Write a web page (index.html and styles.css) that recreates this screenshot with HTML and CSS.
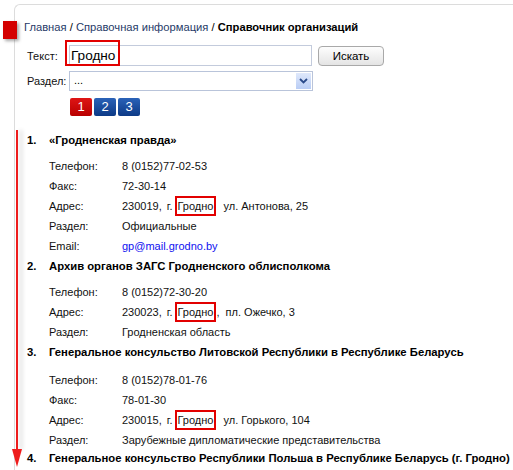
FILE: index.html
```html
<!DOCTYPE html>
<html lang="ru">
<head>
<meta charset="utf-8">
<title>Справочник организаций</title>
<link rel="stylesheet" href="styles.css">
</head>
<body>
<div class="page">
  <div class="mark-square"></div>
  <div class="mark-arrow"></div>
  <div class="panel">
    <div class="crumbs">
      <a href="#" class="crumb-link">Главная</a> / <a href="#" class="crumb-link">Справочная информация</a> / <b>Справочник организаций</b>
    </div>
    <div class="form">
      <div class="label">Текст:</div>
      <div class="field-row">
        <div class="input">
          <span class="input-text">Гродно</span>
          <span class="input-hl"></span>
        </div>
        <div class="btn">Искать</div>
      </div>
      <div class="label">Раздел:</div>
      <div class="select">
        <span class="select-text">...</span>
        <span class="select-btn">
          <svg width="9" height="6" viewBox="0 0 9 6"><path d="M1 1 L4.5 4.5 L8 1" fill="none" stroke="#2a4a8a" stroke-width="1.8"/></svg>
        </span>
      </div>
      <div></div>
      <div class="pager">
        <span class="pg pg-active">1</span>
        <span class="pg">2</span>
        <span class="pg">3</span>
      </div>
    </div>

    <div class="list">
      <div class="item">
        <div class="title"><span class="num">1.</span><span>«Гродненская правда»</span></div>
        <div class="rows">
          <div class="k">Телефон:</div><div class="v">8 (0152)77-02-53</div>
          <div class="k">Факс:</div><div class="v">72-30-14</div>
          <div class="k">Адрес:</div><div class="v">230019,<span class="sp"></span>г.<span class="hl">Гродно</span><span class="sp2"></span>ул. Антонова, 25</div>
          <div class="k">Раздел:</div><div class="v">Официальные</div>
          <div class="k">Email:</div><div class="v"><a href="#" class="mail">gp@mail.grodno.by</a></div>
        </div>
      </div>
      <div class="item">
        <div class="title"><span class="num">2.</span><span>Архив органов ЗАГС Гродненского облисполкома</span></div>
        <div class="rows">
          <div class="k">Телефон:</div><div class="v">8 (0152)72-30-20</div>
          <div class="k">Адрес:</div><div class="v">230023,<span class="sp"></span>г.<span class="hl">Гродно</span>,&nbsp; пл. Ожечко, 3</div>
          <div class="k">Раздел:</div><div class="v">Гродненская область</div>
        </div>
      </div>
      <div class="item">
        <div class="title"><span class="num">3.</span><span>Генеральное консульство Литовской Республики в Республике Беларусь</span></div>
        <div class="rows rows-wide">
          <div class="k">Телефон:</div><div class="v">8 (0152)78-01-76</div>
          <div class="k">Факс:</div><div class="v">78-01-30</div>
          <div class="k">Адрес:</div><div class="v">230015,<span class="sp"></span>г.<span class="hl">Гродно</span><span class="sp2"></span>ул. Горького, 104</div>
          <div class="k">Раздел:</div><div class="v">Зарубежные дипломатические представительства</div>
        </div>
      </div>
      <div class="item">
        <div class="title"><span class="num">4.</span><span>Генеральное консульство Республики Польша в Республике Беларусь (г. Гродно)</span></div>
      </div>
    </div>
  </div>
</div>
</body>
</html>
```
FILE: styles.css
```css
html, body {
  margin: 0;
  padding: 0;
  background: #ffffff;
}
body {
  font-family: "Liberation Sans", Arial, sans-serif;
  font-size: 11px;
  color: #000;
  overflow: hidden;
}
.page {
  position: relative;
  padding-top: 4px;
  height: 466px;
}
.mark-square {
  position: absolute;
  left: 3px;
  top: 21px;
  width: 14px;
  height: 18px;
  background: #d40000;
  box-shadow: 2px 2px 3px rgba(0, 0, 0, 0.35);
  z-index: 2;
}
.mark-arrow {
  position: absolute;
  left: 16px;
  top: 130px;
  width: 2px;
  height: 320px;
  background: #ee1c1c;
  box-shadow: 4px 0 4px rgba(0, 0, 0, 0.18);
  z-index: 2;
}
.mark-arrow::after {
  content: "";
  position: absolute;
  left: -4px;
  bottom: -17px;
  border-left: 5px solid transparent;
  border-right: 5px solid transparent;
  border-top: 18px solid #ee1c1c;
}
.panel {
  margin-left: 14px;
  border-top: 1px solid #dcdcdc;
  border-left: 1px solid #dcdcdc;
  border-top-left-radius: 6px;
  padding: 14px 0 0 12px;
  height: 460px;
}
.crumbs {
  margin-left: -3px;
  line-height: 16px;
  height: 16px;
  white-space: nowrap;
  font-size: 11.2px;
}
.crumb-link {
  color: #1f3a68;
  text-decoration: none;
}
.form {
  margin-top: 10px;
  display: grid;
  grid-template-columns: 42px auto;
  row-gap: 5px;
  align-items: center;
}
.label {
  color: #111;
}
.field-row {
  display: flex;
  align-items: center;
}
.input {
  position: relative;
  width: 241px;
  height: 19px;
  border: 1px solid #c3cbdc;
  background: #fff;
}
.input-text {
  position: absolute;
  left: 1px;
  top: 1px;
  font-size: 13.6px;
  line-height: 18px;
}
.input-hl {
  position: absolute;
  left: -5px;
  top: -6px;
  width: 51px;
  height: 22px;
  border: 2px solid #e20000;
}
.btn {
  margin-left: 6px;
  width: 64px;
  height: 18px;
  border: 1px solid #a9a9a9;
  border-radius: 4px;
  background: linear-gradient(#fdfdfd, #e4e4e4);
  text-align: center;
  line-height: 18px;
  font-size: 11.5px;
}
.select {
  position: relative;
  width: 242px;
  height: 18px;
  border: 1px solid #b9c4da;
  background: #fff;
}
.select-text {
  position: absolute;
  left: 4px;
  top: 0;
  line-height: 17px;
}
.select-btn {
  position: absolute;
  right: 1px;
  top: 1px;
  width: 15px;
  height: 16px;
  background: linear-gradient(#dfe8fb, #b9cdf5);
  display: flex;
  align-items: center;
  justify-content: center;
}
.pager {
  display: flex;
  gap: 2px;
  margin-top: 2px;
  margin-left: 1px;
}
.pg {
  width: 22px;
  height: 18px;
  border-radius: 2px;
  background: linear-gradient(#2a62b8, #0d3a86);
  color: #fff;
  font-size: 13px;
  line-height: 18px;
  text-align: center;
}
.pg-active {
  background: linear-gradient(#de1515, #b90000);
}
.list {
  margin-top: 14px;
}
.title {
  display: flex;
  font-weight: bold;
  font-size: 11.3px;
  line-height: 20px;
  height: 20px;
  white-space: nowrap;
}
.num {
  width: 22px;
  flex: none;
}
.rows {
  margin-left: 22px;
  margin-top: 6px;
  display: grid;
  grid-template-columns: 73px auto;
  grid-auto-rows: 20px;
  align-items: center;
  color: #111;
}
.rows-wide {
  margin-top: 8px;
  margin-bottom: -2px;
}
.v {
  display: flex;
  align-items: center;
  height: 20px;
  white-space: nowrap;
}
.sp {
  display: inline-block;
  width: 5px;
}
.sp2 {
  display: inline-block;
  width: 7px;
}
.hl {
  display: inline-block;
  box-sizing: border-box;
  height: 20px;
  line-height: 16px;
  border: 2px solid #e20000;
  padding: 0 1px;
  margin-left: 2px;
}
.mail {
  color: #1010f0;
  text-decoration: none;
}
```
